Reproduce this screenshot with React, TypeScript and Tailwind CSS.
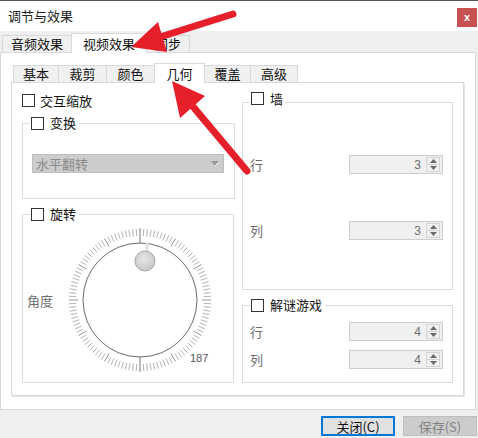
import React from "react";

type TabProps = { label: string; width: string; active?: boolean; first?: boolean };

function Tab({ label, width, active, first }: TabProps) {
  return (
    <div
      className={`${width} ${first ? "" : "-ml-px"} flex items-center justify-center border-t border-l border-r border-[#d9d9d9] ${
        active ? "h-[20px] -mb-px bg-white relative z-10" : "h-[17px] bg-[#f0f0f0]"
      }`}
    >
      <span className="leading-[14px] text-[#111]">{label}</span>
    </div>
  );
}

function Checkbox() {
  return <span className="block w-[13px] h-[13px] border border-[#333] bg-white shrink-0" />;
}

function Legend({ label, tall }: { label: string; tall?: boolean }) {
  return (
    <legend className={`ml-[7px] px-[1px] ${tall ? "h-[20px]" : "h-[14px]"}`}>
      <span className={`flex gap-[6px] ${tall ? "items-start" : "items-center h-[14px]"}`}>
        <Checkbox />
        <span className="leading-[14px] text-[#111] pr-[2px]">{label}</span>
      </span>
    </legend>
  );
}

function SpinBox({ value }: { value: number }) {
  return (
    <div className="w-[94px] h-[19px] border border-[#cccccc] bg-[#f0f0f0] flex items-center justify-end pr-[2px]">
      <span className="font-['Liberation_Sans',sans-serif] text-[12px] text-[#6d6d6d] leading-none mr-[5px]">{value}</span>
      <div className="w-[14px] h-[15px] border border-[#d4d4d4] flex flex-col">
        <div className="flex-1 flex items-center justify-center border-b border-[#d4d4d4]">
          <svg width="7" height="4" viewBox="0 0 7 4"><path d="M0 4 L3.5 0 L7 4 Z" fill="#6a6a6a" /></svg>
        </div>
        <div className="flex-1 flex items-center justify-center">
          <svg width="7" height="4" viewBox="0 0 7 4"><path d="M0 0 L3.5 4 L7 0 Z" fill="#6a6a6a" /></svg>
        </div>
      </div>
    </div>
  );
}

function FieldRow({ label, value, className }: { label: string; value: number; className?: string }) {
  return (
    <div className={`flex items-center justify-between pl-[7px] pr-[9px] h-[19px] ${className ?? ""}`}>
      <span className="text-[#6d6d6d] leading-none">{label}</span>
      <SpinBox value={value} />
    </div>
  );
}

function Dial() {
  const ticks = [];
  for (let i = 0; i < 120; i++) {
    const a = (i * 3 * Math.PI) / 180;
    const axis = i % 60 === 0;
    const major = i % 10 === 0;
    const r1 = axis ? 57 : major ? 62 : 64;
    const r2 = axis ? 72 : 71;
    const sx = Math.sin(a);
    const cy = -Math.cos(a);
    ticks.push(
      <line
        key={i}
        x1={75 + r1 * sx}
        y1={75 + r1 * cy}
        x2={75 + r2 * sx}
        y2={75 + r2 * cy}
        stroke={axis ? "#7a7a7a" : major ? "#959595" : "#b4b4b4"}
        strokeWidth="1"
      />
    );
  }
  return (
    <svg width="150" height="150" viewBox="0 0 150 150" className="ml-[12px] shrink-0">
      <defs>
        <radialGradient id="knob" cx="45%" cy="40%" r="60%">
          <stop offset="0%" stopColor="#e6e6e6" />
          <stop offset="100%" stopColor="#c8c8c8" />
        </radialGradient>
      </defs>
      {ticks}
      <circle cx="75" cy="75" r="57" fill="#fff" stroke="#6a6a6a" strokeWidth="1" />
      <line x1="82" y1="18" x2="82" y2="26" stroke="#e0e0e0" strokeWidth="3" />
      <circle cx="80" cy="36" r="10" fill="url(#knob)" stroke="#a6a6a6" strokeWidth="1" />
      <text x="125" y="137" fontSize="11" fill="#555" fontFamily="Liberation Sans, sans-serif">
        187
      </text>
    </svg>
  );
}

function Arrows() {
  return (
    <svg className="absolute inset-0 pointer-events-none z-20" width="478" height="438" viewBox="0 0 478 438">
      <line x1="233" y1="14" x2="160" y2="37" stroke="#e5202a" strokeWidth="7" strokeLinecap="round" />
      <polygon points="131,47 158,22 167,52" fill="#e5202a" />
      <line x1="247" y1="171" x2="190" y2="103" stroke="#e5202a" strokeWidth="7" strokeLinecap="round" />
      <polygon points="172,81 205,96 180,118" fill="#e5202a" />
    </svg>
  );
}

export default function App() {
  return (
    <div className="relative w-[478px] h-[438px] overflow-hidden bg-[#efefef] flex flex-col font-['Noto_Sans_CJK_SC',sans-serif] text-[13px] text-[#111]">
      {/* title bar */}
      <div className="h-[31px] bg-white border-t border-[#555] flex items-start justify-between pl-[8px] pr-px">
        <span className="mt-[6px] leading-[18px] text-[#222]">调节与效果</span>
        <div className="mt-[7px] w-[20px] h-[19px] bg-[#c75050] flex items-center justify-center">
          <span className="font-['Liberation_Sans',sans-serif] text-[11px] font-bold text-white leading-none">x</span>
        </div>
      </div>

      {/* outer tabs */}
      <div className="h-[21px] flex items-end pl-[2px]">
        <Tab label="音频效果" width="w-[70px]" first />
        <Tab label="视频效果" width="w-[76px]" active />
        <Tab label="同步" width="w-[44px]" />
      </div>

      <div className="w-[476px] h-[358px] border border-[#d9d9d9] bg-white pt-[10px] pl-[10px]">
        {/* inner tabs */}
        <div className="h-[19px] flex items-end pl-[2px]">
          <Tab label="基本" width="w-[46px]" first />
          <Tab label="裁剪" width="w-[49px]" />
          <Tab label="颜色" width="w-[49px]" />
          <Tab label="几何" width="w-[51px]" active />
          <Tab label="覆盖" width="w-[47px]" />
          <Tab label="高级" width="w-[48px]" />
        </div>

        <div className="w-[453px] h-[314px] border border-[#d9d9d9] bg-white shadow-[1px_1px_0_#e4e4e4] flex pl-[10px] gap-[8px]">
          {/* left column */}
          <div className="w-[212px] flex flex-col pt-[11px]">
            <div className="flex items-center gap-[5px] h-[13px]">
              <Checkbox />
              <span className="leading-[14px]">交互缩放</span>
            </div>

            <fieldset className="mt-[9px] border border-[#dcdcdc] w-[213px]">
              <Legend label="变换" />
              <div className="mt-[24px] mb-[25px] ml-[9px] w-[192px] h-[19px] bg-[#cccccc] border border-[#bfbfbf] flex items-center justify-between pl-[3px] pr-[4px]">
                <span className="text-[#8a8a8a] leading-none">水平翻转</span>
                <svg width="8" height="5" viewBox="0 0 8 5">
                  <path d="M0 0 L8 0 L4 5 Z" fill="#9a9a9a" />
                  <path d="M4 5 L8 1" stroke="#fff" strokeWidth="1" />
                </svg>
              </div>
            </fieldset>

            <fieldset className="mt-[8px] border border-[#dcdcdc]">
              <Legend label="旋转" />
              <div className="flex items-center pl-[4px] pt-[4px] pb-[7px]">
                <span className="text-[#6d6d6d] leading-none">角度</span>
                <Dial />
              </div>
            </fieldset>
          </div>

          {/* right column */}
          <div className="w-[211px] flex flex-col pt-[9px]">
            <fieldset className="border border-[#dcdcdc] pb-[49px]">
              <Legend label="墙" tall />
              <FieldRow label="行" value={3} className="mt-[43px]" />
              <FieldRow label="列" value={3} className="mt-[47px]" />
            </fieldset>

            <fieldset className="mt-[8px] border border-[#dcdcdc] pb-[13px]">
              <Legend label="解谜游戏" />
              <FieldRow label="行" value={4} className="mt-[10px]" />
              <FieldRow label="列" value={4} className="mt-[9px]" />
            </fieldset>
          </div>
        </div>
      </div>

      {/* buttons */}
      <div className="flex-1 flex justify-end items-start pt-[6px] pr-px gap-[8px]">
        <button className="w-[74px] h-[20px] border-2 border-[#0078d7] bg-[#e1e1e1] flex items-center justify-center leading-none text-[#111]">
          关闭(C)
        </button>
        <button className="w-[74px] h-[20px] border border-[#bfbfbf] bg-[#cccccc] flex items-center justify-center leading-none text-[#838383]">
          保存(S)
        </button>
      </div>

      <Arrows />
    </div>
  );
}
